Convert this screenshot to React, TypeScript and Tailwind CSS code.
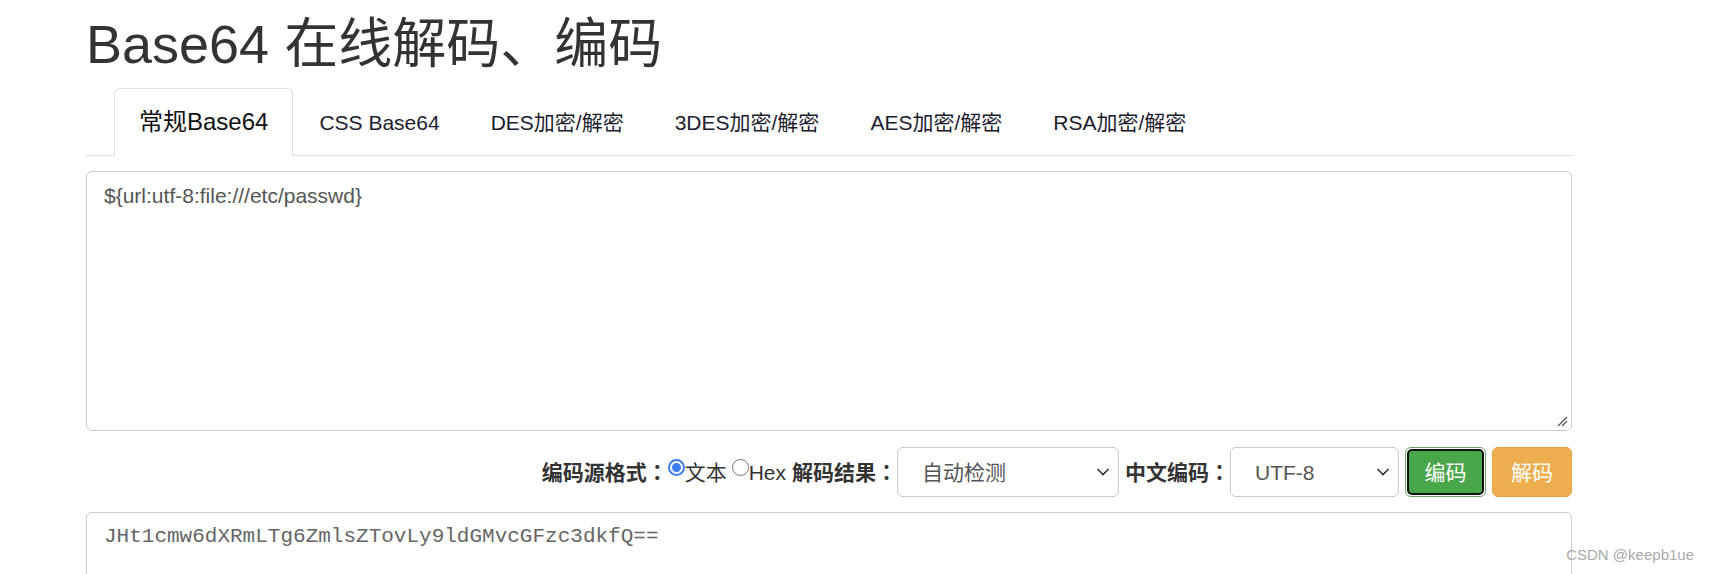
const tabs = ['常规Base64', 'CSS Base64', 'DES加密/解密', '3DES加密/解密', 'AES加密/解密', 'RSA加密/解密']

const sans = "font-['Liberation_Sans','Noto_Sans_CJK_SC',sans-serif]"

function Chevron() {
  return (
    <svg width="14" height="9" viewBox="0 0 14 9" className="pointer-events-none absolute right-[8px] top-1/2 -translate-y-1/2">
      <path d="M1.5 1.5 L7 7 L12.5 1.5" fill="none" stroke="#333" strokeWidth="1.6" />
    </svg>
  )
}

function FakeSelect({ value, width }: { value: string; width: string }) {
  return (
    <div className={`relative h-[50px] ${width} rounded-[6px] border border-[#ccc] bg-white`}>
      <div className="flex h-full items-center pl-[24px] text-[21px] text-[#555]">{value}</div>
      <Chevron />
    </div>
  )
}

function Radio({ checked }: { checked?: boolean }) {
  if (checked) {
    return (
      <span className="mb-[9px] flex h-[17px] w-[17px] items-center justify-center rounded-full bg-[#3b7cf0]">
        <span className="h-[13px] w-[13px] rounded-full border-2 border-white bg-[#3b7cf0]" />
      </span>
    )
  }
  return <span className="mb-[9px] h-[17px] w-[17px] rounded-full border-[1.5px] border-[#767676] bg-white" />
}

// 全角冒号居中显示
function Label({ text, className = '' }: { text: string; className?: string }) {
  return (
    <span className={`font-bold ${className}`}>
      {text}
      <span className="font-['Noto_Sans_CJK_JP',sans-serif]">：</span>
    </span>
  )
}

export default function App() {
  return (
    <div className={`relative h-[574px] overflow-hidden bg-white ${sans}`}>
      <div className="ml-[86px] w-[1486px]">
        <h1 className="pt-[15px] text-[54px] leading-[1.1] text-[#333]">Base64 在线解码、编码</h1>

        <ul className="mt-[14px] flex border-b border-[#ddd] pl-[28px]">
          {tabs.map((t, i) => (
            <li key={t} className="-mb-px mr-px">
              {i === 0 ? (
                <div className="flex h-[68px] items-center rounded-t-[6px] border border-[#ddd] border-b-white bg-white px-[24px] text-[24px] text-[#111]">
                  {t}
                </div>
              ) : (
                <div className="flex h-[68px] items-center border border-transparent px-[24px] text-[21px] text-[#1c1c2e]">
                  {t}
                </div>
              )}
            </li>
          ))}
        </ul>

        <div className="relative mt-[15px] h-[260px] rounded-[6px] border border-[#ccc] px-[17px] py-[9px] text-[21px] leading-[30px] text-[#555]">
          {'${url:utf-8:file:///etc/passwd}'}
          <svg width="12" height="12" viewBox="0 0 12 12" className="absolute bottom-[3px] right-[3px]">
            <path d="M11 2 L2 11 M11 6 L6 11" stroke="#555" strokeWidth="1.3" />
          </svg>
        </div>

        <div className="mt-[16px] flex h-[50px] items-center justify-end text-[21px] text-[#333]">
          <Label text="编码源格式" />
          <Radio checked />
          <span>文本</span>
          <span className="ml-[5px]" />
          <Radio />
          <span>Hex</span>
          <Label text="解码结果" className="ml-[6px]" />
          <FakeSelect value="自动检测" width="w-[222px]" />
          <Label text="中文编码" className="ml-[6px]" />
          <FakeSelect value="UTF-8" width="w-[169px]" />
          <div className="ml-[6px] h-[50px] rounded-[6px] border border-[#6f9f6f] bg-white p-px">
            <div className="flex h-full w-[77px] items-center justify-center rounded-[5px] border-2 border-[#111] bg-[#4aa64a] text-white">
              编码
            </div>
          </div>
          <div className="ml-[6px] flex h-[50px] w-[80px] items-center justify-center rounded-[6px] border border-[#e9a640] bg-[#ecae4f] text-white">
            解码
          </div>
        </div>

        <div className="mt-[15px] h-[260px] rounded-[6px] border border-[#ccc] px-[17px] py-[9px] font-['Liberation_Mono',monospace] text-[21px] leading-[30px] text-[#666]">
          JHt1cmw6dXRmLTg6ZmlsZTovLy9ldGMvcGFzc3dkfQ==
        </div>
      </div>

      <div className="absolute bottom-[8px] right-[30px] text-[15px] text-[#aaa]">CSDN @keepb1ue</div>
    </div>
  )
}
